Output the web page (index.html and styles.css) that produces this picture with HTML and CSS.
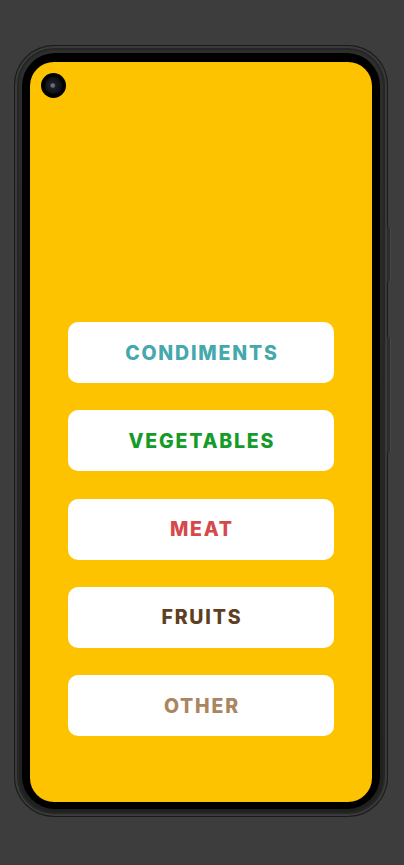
FILE: index.html
```html
<!DOCTYPE html>
<html lang="en">
<head>
<meta charset="utf-8">
<title>Categories</title>
<link rel="stylesheet" href="styles.css">
</head>
<body>
<div class="stage">
  <div class="phone">
    <span class="side-btn side-btn--power"></span>
    <span class="side-btn side-btn--volume"></span>
    <div class="bezel">
      <div class="screen">
        <span class="camera"><span class="camera-lens"></span></span>
        <div class="menu">
          <button class="cat cat--condiments">CONDIMENTS</button>
          <button class="cat cat--vegetables">VEGETABLES</button>
          <button class="cat cat--meat">MEAT</button>
          <button class="cat cat--fruits">FRUITS</button>
          <button class="cat cat--other">OTHER</button>
        </div>
      </div>
    </div>
  </div>
</div>
</body>
</html>
```

FILE: styles.css
```css
html, body {
  margin: 0;
  padding: 0;
  background: #3d3d3d;
  width: 404px;
  height: 865px;
  overflow: hidden;
}

.stage {
  padding: 45px 0 0 14px;
}

.phone {
  position: relative;
  width: 374px;
  height: 772px;
  box-sizing: border-box;
  border-radius: 40px;
  padding: 8px;
  background: linear-gradient(180deg, #2e2e2e 0%, #202020 100%);
  box-shadow: inset 0 0 0 1px #1a1a1a, inset 0 0 0 3px #3a3a3a, inset 0 0 0 5px #262626;
}

.bezel {
  height: 100%;
  box-sizing: border-box;
  border-radius: 33px;
  background: #000;
  padding: 9px 8px 7px 8px;
}

.screen {
  position: relative;
  height: 100%;
  border-radius: 24px;
  background: #fdc300;
  display: flex;
  flex-direction: column;
  justify-content: flex-end;
  padding: 0 38px 66px 38px;
  box-sizing: border-box;
  overflow: hidden;
}

.camera {
  position: absolute;
  left: 11px;
  top: 11px;
  width: 25px;
  height: 25px;
  border-radius: 50%;
  background: #000;
  display: flex;
  align-items: center;
  justify-content: center;
}

.camera-lens {
  width: 15px;
  height: 15px;
  border-radius: 50%;
  background: radial-gradient(circle at 45% 50%, #6a6e78 0 1.5px, #1c1e26 3px, #0a0a0e 100%);
  box-shadow: 0 0 0 1px #15161b;
}

.menu {
  display: flex;
  flex-direction: column;
  gap: 27.25px;
}

.cat {
  height: 61px;
  border: 0;
  border-radius: 10px;
  background: #fff;
  font-family: "Inter", "Open Sans", sans-serif;
  font-weight: 800;
  font-size: 19.5px;
  letter-spacing: 1.8px;
  padding: 0 0 0 1.8px;
  cursor: pointer;
}

.cat--condiments { color: #45a8ad; }
.cat--vegetables { color: #149b28; }
.cat--meat { color: #d5494b; }
.cat--fruits { color: #5e3f21; }
.cat--other { color: #ab8562; }

.side-btn {
  position: absolute;
  right: -3px;
  width: 4px;
  background: #2d2d2d;
  border-radius: 0 2px 2px 0;
  box-shadow: inset -1px 0 0 #474747;
}

.side-btn--power {
  top: 182px;
  height: 55px;
}

.side-btn--volume {
  top: 292px;
  height: 116px;
}
```
